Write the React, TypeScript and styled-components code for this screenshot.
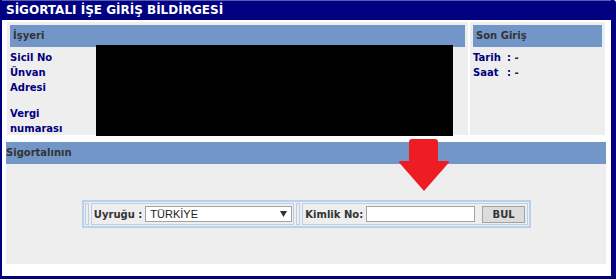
import React from "react";
import styled, { createGlobalStyle } from "styled-components";

const GlobalStyle = createGlobalStyle`
  html, body { margin: 0; padding: 0; background: #fff; }
  body { font-family: "DejaVu Sans", Verdana, sans-serif; }
  * { box-sizing: border-box; }
`;

const NAVY = "#000080";
const HEAD_BLUE = "#7296c8";
const PANEL = "#eeeeee";
const FORM_LINE = "#b9d0ea";

const Window = styled.div`
  position: relative;
  width: 616px;
  height: 279px;
  background: #fff;
  border-left: 2px solid ${NAVY};
  border-right: 5px solid ${NAVY};
  border-bottom: 3px solid ${NAVY};
  border-top-right-radius: 3px;
  display: flex;
  flex-direction: column;
  overflow: hidden;
`;

const TitleBar = styled.div`
  height: 20px;
  flex: none;
  background: ${NAVY};
  border-top: 1px solid #5a5ab8;
  color: #fff;
  font-weight: bold;
  font-size: 12px;
  line-height: 19px;
  padding-left: 4px;
  white-space: nowrap;
`;

const TopRow = styled.div`
  display: flex;
  gap: 2px;
  margin: 2px 6px 0 5px;
  height: 113px;
`;

const Cell = styled.div<{ $w?: number }>`
  background: ${PANEL};
  padding: 3px 3px 0 3px;
  ${(p) => (p.$w ? `width: ${p.$w}px; flex: none;` : "flex: 1;")}
  display: flex;
  flex-direction: column;
`;

const HeadBar = styled.div<{ $pad?: number }>`
  background: ${HEAD_BLUE};
  height: 22px;
  flex: none;
  color: #333;
  font-weight: bold;
  font-size: 10px;
  line-height: 22px;
  padding-left: ${(p) => p.$pad ?? 3}px;
  white-space: nowrap;
`;

const CellBody = styled.div`
  display: flex;
  flex: 1;
`;

const LabelCol = styled.div`
  width: 86px;
  flex: none;
  padding-top: 3px;
  display: flex;
  flex-direction: column;
`;

const Label = styled.div<{ $gapAfter?: number }>`
  color: ${NAVY};
  font-weight: bold;
  font-size: 10px;
  line-height: 15px;
  width: 70px;
  margin-bottom: ${(p) => p.$gapAfter ?? 0}px;
`;

const Redacted = styled.div`
  width: 357px;
  height: 91px;
  margin-top: -2px;
  background: #000;
  flex: none;
`;

const InfoList = styled.div`
  padding-top: 3px;
  display: flex;
  flex-direction: column;
`;

const InfoLine = styled.div`
  font-weight: bold;
  font-size: 10px;
  line-height: 15px;
  color: ${NAVY};
  white-space: nowrap;
`;

const InfoKey = styled.span`
  display: inline-block;
  width: 34px;
`;

const InfoVal = styled.span`
  color: #222;
`;

const Section = styled.div`
  margin: 7px 5px 0 4px;
  display: flex;
  flex-direction: column;
`;

const SectionBody = styled.div`
  background: ${PANEL};
  height: 100px;
  display: flex;
  align-items: center;
  justify-content: center;
`;

const FormBox = styled.div`
  border: 2px solid ${FORM_LINE};
  padding: 1px;
  display: flex;
  gap: 2px;
  height: 28px;
  margin-left: 1px;
`;

const FormCell = styled.div<{ $spacer?: boolean }>`
  border: 1px solid ${FORM_LINE};
  display: flex;
  align-items: center;
  ${(p) => (p.$spacer ? "width: 4px;" : "padding: 0 1px 0 2px;")}
`;

const FormLabel = styled.span`
  font-weight: bold;
  font-size: 10px;
  color: #333;
  white-space: nowrap;
  margin-right: 3px;
`;

const FakeSelect = styled.div`
  width: 147px;
  height: 16px;
  background: #fff;
  border: 1px solid #a3a3a3;
  font-family: "Liberation Sans", Arial, sans-serif;
  font-size: 11px;
  color: #222;
  padding-left: 4px;
  display: flex;
  align-items: center;
  justify-content: space-between;
  padding-right: 4px;
`;

const TextBox = styled.div`
  width: 109px;
  height: 16px;
  background: #fff;
  border: 1px solid #a3a3a3;
`;

const Button = styled.div`
  width: 43px;
  height: 17px;
  margin-left: 7px;
  margin-right: 1px;
  background: #dcdcdc;
  border: 1px solid #a3a3a3;
  font-weight: bold;
  font-size: 10px;
  color: #333;
  display: flex;
  align-items: center;
  justify-content: center;
`;

const ArrowSvg = styled.svg`
  position: absolute;
  left: 393px;
  top: 138px;
  pointer-events: none;
`;

export default function App() {
  return (
    <>
      <GlobalStyle />
      <Window>
        <TitleBar>SİGORTALI İŞE GİRİŞ BİLDİRGESİ</TitleBar>
        <TopRow>
          <Cell>
            <HeadBar>İşyeri</HeadBar>
            <CellBody>
              <LabelCol>
                <Label>Sicil No</Label>
                <Label>Ünvan</Label>
                <Label $gapAfter={11}>Adresi</Label>
                <Label>Vergi numarası</Label>
              </LabelCol>
              <Redacted />
            </CellBody>
          </Cell>
          <Cell $w={135}>
            <HeadBar>Son Giriş</HeadBar>
            <InfoList>
              <InfoLine>
                <InfoKey>Tarih</InfoKey>: <InfoVal>-</InfoVal>
              </InfoLine>
              <InfoLine>
                <InfoKey>Saat</InfoKey>: <InfoVal>-</InfoVal>
              </InfoLine>
            </InfoList>
          </Cell>
        </TopRow>
        <Section>
          <HeadBar $pad={0}>Sigortalının</HeadBar>
          <SectionBody>
            <FormBox>
              <FormCell $spacer />
              <FormCell>
                <FormLabel>Uyruğu :</FormLabel>
                <FakeSelect>
                  <span>TÜRKİYE</span>
                  <svg width="7" height="6" viewBox="0 0 7 6">
                    <path d="M0 0 H7 L3.5 6 Z" fill="#333" />
                  </svg>
                </FakeSelect>
              </FormCell>
              <FormCell $spacer />
              <FormCell>
                <FormLabel>Kimlik No:</FormLabel>
                <TextBox />
                <Button>BUL</Button>
              </FormCell>
            </FormBox>
          </SectionBody>
        </Section>
        <ArrowSvg width="58" height="58" viewBox="395 139 58 58">
          <path
            d="M409 143 Q409 140 412 140 L435 140 Q438 140 438 143 L438 162 L447 162 Q450 162 448.5 164 L424 192 L399.5 164 Q398 162 401 162 L409 162 Z"
            fill="#ee1d24"
          />
        </ArrowSvg>
      </Window>
    </>
  );
}
